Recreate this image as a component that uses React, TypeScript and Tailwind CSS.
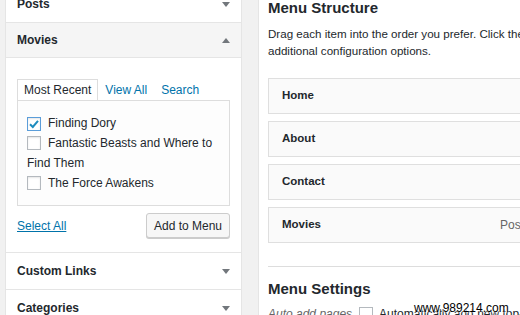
import React from "react";

const Down = () => (
  <svg width="8" height="5" viewBox="0 0 8 5" className="block">
    <path d="M0 0 L8 0 L4 5 Z" fill="#72777c" />
  </svg>
);
const Up = () => (
  <svg width="8" height="5" viewBox="0 0 8 5" className="block">
    <path d="M0 5 L8 5 L4 0 Z" fill="#72777c" />
  </svg>
);

const Box = ({ checked }: { checked?: boolean }) => (
  <span
    className={`inline-flex items-center justify-center w-[14px] h-[14px] align-[-3px] mr-[7px] border bg-white shadow-[inset_0_1px_2px_rgba(0,0,0,0.1)] ${
      checked ? "border-[#5b9dd9]" : "border-[#b4b9be]"
    }`}
  >
    {checked && (
      <svg width="12" height="12" viewBox="0 0 12 12">
        <path d="M2 6.2 L4.8 9 L10 2.8" stroke="#1e8cbe" strokeWidth="2" fill="none" />
      </svg>
    )}
  </span>
);

const Row = ({ label, up, h }: { label: string; up?: boolean; h: string }) => (
  <div className={`${h} flex items-center justify-between pl-[11px] pr-[11px] text-[12px] font-bold text-[#23282d]`}>
    <span>{label}</span>
    {up ? <Up /> : <Down />}
  </div>
);

const MenuItem = ({ label, type }: { label: string; type?: string }) => (
  <div className="w-[400px] h-[36px] border border-[#dfdfdf] bg-[#fafafa] flex items-center pl-[13px] text-[11.5px] font-bold text-[#23282d]">
    <span className="w-[218px]">{label}</span>
    {type && <span className="font-normal text-[12px] text-[#666]">{type}</span>}
  </div>
);

export default function App() {
  return (
    <div className="w-[520px] h-[315px] overflow-hidden bg-[#f1f1f1] flex font-['Liberation_Sans',Arial,sans-serif] text-[#23282d] relative">
      {/* Left column */}
      <div className="ml-[5px] w-[237px] shrink-0 mt-[-14px] flex flex-col bg-white border-x border-[#e5e5e5] self-start">
        <div className="border-b border-[#e5e5e5]">
          <Row label="Posts" h="h-[36px]" />
        </div>
        <div className="bg-[#f5f5f5] border-b border-[#e5e5e5]">
          <Row label="Movies" up h="h-[34px]" />
        </div>
        <div className="pt-[22px] pl-[11px] pr-[11px] pb-[14px] border-b border-[#e5e5e5]">
          <div className="flex items-end text-[12px] h-[20px]">
            <div className="h-[21px] px-[6px] border border-b-0 border-[#dddddd] bg-white relative z-10 leading-[20px] text-[#23282d]">
              Most Recent
            </div>
            <div className="ml-[7px] leading-[20px] text-[#0073aa]">View All</div>
            <div className="ml-[14px] leading-[20px] text-[#0073aa]">Search</div>
          </div>
          <div className="border border-[#dddddd] bg-[#fdfdfd] h-[106px] pl-[9px] pt-[12px] text-[12px] leading-[20px] text-[#23282d]">
            <div>
              <Box checked />
              Finding Dory
            </div>
            <div>
              <Box />
              Fantastic Beasts and Where to
              <br />
              Find Them
            </div>
            <div>
              <Box />
              The Force Awakens
            </div>
          </div>
          <div className="flex items-center justify-between mt-[7px]">
            <span className="text-[12px] text-[#0073aa] underline">Select All</span>
            <button className="h-[25px] px-[7px] border border-[#cccccc] bg-[#f7f7f7] rounded-[3px] shadow-[0_1px_0_#cccccc] text-[12px] text-[#23282d]">
              Add to Menu
            </button>
          </div>
        </div>
        <div className="border-b border-[#e5e5e5]">
          <Row label="Custom Links" h="h-[36px]" />
        </div>
        <div className="border-b border-[#e5e5e5]">
          <Row label="Categories" h="h-[36px]" />
        </div>
      </div>

      {/* Right panel */}
      <div className="ml-[16px] w-[600px] shrink-0 bg-white border-l border-[#e5e5e5] pl-[9px] mt-[-10px] self-start h-[400px]">
        <div className="text-[15px] font-bold leading-[20px] mt-[8px]">Menu Structure</div>
        <div className="text-[11.6px] leading-[17px] mt-[7px] whitespace-nowrap">
          Drag each item into the order you prefer. Click the arrow on the right of the item to reveal
          <br />
          additional configuration options.
        </div>
        <div className="flex flex-col gap-[7px] mt-[19px]">
          <MenuItem label="Home" />
          <MenuItem label="About" />
          <MenuItem label="Contact" />
          <MenuItem label="Movies" type="Post Type" />
        </div>
        <div className="mt-[23px] border-t border-[#dddddd]" />
        <div className="text-[15px] font-bold leading-[20px] mt-[12px]">Menu Settings</div>
        <div className="flex items-center text-[12px] leading-[16px] mt-[7px] whitespace-nowrap">
          <span className="italic text-[#666]">Auto add pages</span>
          <span className="ml-[7px] w-[14px] h-[14px] border border-[#b4b9be] bg-white" />
          <span className="ml-[6px]">Automatically add new top-level pages</span>
        </div>
      </div>

      <div className="absolute left-[414px] top-[301px] text-[12px] leading-[14px] text-black [text-shadow:0_0_2px_white,0_0_2px_white]">
        www.989214.com
      </div>
    </div>
  );
}
